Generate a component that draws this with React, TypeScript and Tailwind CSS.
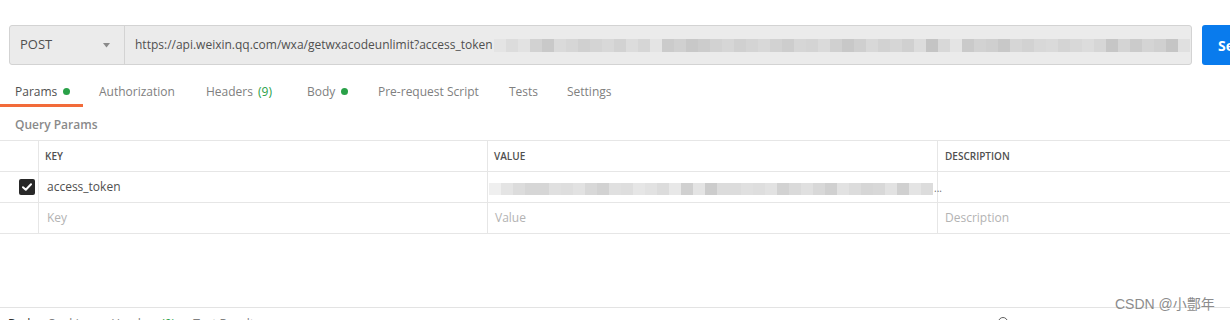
import React from "react";

const urlBlur = [
  "#e4e4e4", "#dcdcdc", "#e2e2e2", "#d2d2d2", "#c9c9c9", "#dadada", "#d6d6d6", "#d0d0d0",
  "#d4d4d4", "#d8d8d8", "#d2d2d2", "#dcdcdc", "#d6d6d6", "#e4e4e4", "#cbcbcb", "#d0d0d0",
  "#c8c8c8", "#cccccc", "#d2d2d2", "#d6d6d6", "#d0d0d0", "#d4d4d4", "#d8d8d8", "#d2d2d2",
  "#cdcdcd", "#d6d6d6", "#d4d4d4", "#dadada", "#d0d0d0", "#c8c8c8", "#cfcfcf", "#d8d8d8",
  "#d2d2d2", "#d6d6d6", "#d0d0d0", "#dcdcdc", "#c4c4c4", "#d8d8d8", "#e4e4e4", "#cacaca",
  "#d2d2d2", "#cfcfcf", "#c8c8c8", "#d6d6d6", "#d2d2d2", "#d8d8d8", "#dadada", "#d4d4d4",
  "#d8d8d8", "#dcdcdc", "#d6d6d6", "#c6c6c6", "#d4d4d4", "#cbcbcb", "#d4d4d4", "#d0d0d0",
  "#c5c5c5", "#e0e0e0",
];

const valueBlur = [
  "#efefef", "#e4e4e4", "#dcdcdc", "#d6d6d6", "#d6d6d6", "#e0e0e0", "#dedede", "#e2e2e2",
  "#d8d8d8", "#d2d2d2", "#e0e0e0", "#dedede", "#e6e6e6", "#e2e2e2", "#dcdcdc", "#e8e8e8",
  "#d0d0d0", "#e4e4e4", "#cccccc", "#dcdcdc", "#dcdcdc", "#e0e0e0", "#dedede", "#e2e2e2",
  "#d2d2d2", "#dadada", "#e0e0e0", "#d8d8d8", "#d0d0d0", "#e2e2e2", "#dcdcdc", "#d6d6d6",
  "#d8d8d8", "#e2e2e2", "#d0d0d0", "#e4e4e4", "#dcdcdc",
];

function Dot() {
  return <span className="inline-block w-[7px] h-[7px] rounded-full bg-[#2aa148] ml-[6px] align-middle mb-[2px]" />;
}

export default function App() {
  return (
    <div className="relative w-[1230px] h-[320px] overflow-hidden bg-white font-['Open_Sans',sans-serif] text-[#505050]">
      {/* top bar */}
      <div className="flex pt-[25px] pl-[9px] gap-[10px]">
        <div className="flex shrink-0 w-[1183px] h-[40px] rounded-[3px] border border-[#d3d3d3] bg-[#ebebeb] overflow-hidden">
          <div className="flex items-center justify-between w-[115px] shrink-0 border-r border-[#d3d3d3] pl-[10px] pr-[14px] text-[13px] text-[#505050]">
            <span>POST</span>
            <svg width="7" height="5" viewBox="0 0 7 5">
              <path d="M0 0 L7 0 L3.5 4.5 Z" fill="#8a8a8a" />
            </svg>
          </div>
          <div className="flex items-center pl-[10px] text-[12px] text-[#505050] whitespace-nowrap">
            <span>https://api.weixin.qq.com/wxa/getwxacodeunlimit?access_token</span>
            <div className="flex h-[13px] ml-[1px]">
              {urlBlur.map((c, i) => (
                <div key={i} className="w-[12px] h-full" style={{ backgroundColor: c }} />
              ))}
            </div>
          </div>
        </div>
        <div className="flex items-center w-[80px] h-[40px] shrink-0 rounded-[3px] bg-[#097bed] pl-[16px] text-[14px] font-bold text-white">
          Send
        </div>
      </div>

      {/* tabs */}
      <div className="flex h-[42px] text-[12px] text-[#808080]">
        <div className="relative w-[99px] shrink-0 pl-[15px] pt-[18px] text-[#505050]">
          <span>Params</span>
          <Dot />
          <div className="absolute left-0 bottom-0 w-[83px] h-[3px] bg-[#f26b3a]" />
        </div>
        <div className="w-[107px] shrink-0 pt-[18px]">Authorization</div>
        <div className="w-[101px] shrink-0 pt-[18px]">
          Headers <span className="text-[#2aa148] ml-[2px]">(9)</span>
        </div>
        <div className="w-[71px] shrink-0 pt-[18px]">
          <span>Body</span>
          <Dot />
        </div>
        <div className="w-[131px] shrink-0 pt-[18px]">Pre-request Script</div>
        <div className="w-[58px] shrink-0 pt-[18px]">Tests</div>
        <div className="shrink-0 pt-[18px]">Settings</div>
      </div>

      {/* query params */}
      <div className="h-[33px] pl-[15px] pt-[9px] text-[12px] font-semibold text-[#8a8a8a]">Query Params</div>

      <div className="grid grid-cols-[39px_449px_450px_1fr] border-t border-[#e6e6e6] text-[12px]">
        {/* header */}
        <div className="h-[31px] border-r border-b border-[#e6e6e6]" />
        <div className="h-[31px] flex items-center pl-[6px] border-r border-b border-[#e6e6e6] text-[10px] font-semibold text-[#505050]">KEY</div>
        <div className="h-[31px] flex items-center pl-[6px] border-r border-b border-[#e6e6e6] text-[10px] font-semibold text-[#505050]">VALUE</div>
        <div className="h-[31px] flex items-center pl-[7px] border-b border-[#e6e6e6] text-[10px] font-semibold text-[#505050]">DESCRIPTION</div>

        {/* row 1 */}
        <div className="h-[31px] flex items-center pl-[19px] border-r border-b border-[#e6e6e6]">
          <div className="w-[16px] h-[16px] rounded-[2px] bg-[#282828] flex items-center justify-center">
            <svg width="10" height="8" viewBox="0 0 10 8">
              <path d="M1 4.2 L3.8 6.8 L9 1.2" fill="none" stroke="#fff" strokeWidth="2" strokeLinecap="round" strokeLinejoin="round" />
            </svg>
          </div>
        </div>
        <div className="h-[31px] flex items-center pl-[8px] border-r border-b border-[#e6e6e6] text-[#505050]">access_token</div>
        <div className="h-[31px] flex items-center pl-[1px] border-r border-b border-[#e6e6e6]">
          <div className="flex h-[12px] mt-[3px]">
            {valueBlur.map((c, i) => (
              <div key={i} className="w-[12px] h-full" style={{ backgroundColor: c }} />
            ))}
          </div>
          <span className="ml-[1px] mt-[3px] text-[10px] text-[#707070]">...</span>
        </div>
        <div className="h-[31px] border-b border-[#e6e6e6]" />

        {/* row 2 */}
        <div className="h-[31px] border-r border-b border-[#e6e6e6]" />
        <div className="h-[31px] flex items-center pl-[8px] border-r border-b border-[#e6e6e6] text-[#b3b3b3]">Key</div>
        <div className="h-[31px] flex items-center pl-[7px] border-r border-b border-[#e6e6e6] text-[#b3b3b3]">Value</div>
        <div className="h-[31px] flex items-center pl-[7px] border-b border-[#e6e6e6] text-[#b3b3b3]">Description</div>
      </div>

      {/* empty area + divider */}
      <div className="h-[74px] border-b border-[#e3e3e3]" />

      {/* response tabs (cut off) */}
      <div className="flex items-start pt-[8px] text-[12px] text-[#808080] leading-[16px]">
        <span className="ml-[8px] text-[#303030]">Body</span>
        <span className="ml-[11px]">Cookies</span>
        <span className="ml-[20px]">Headers <span className="text-[#2aa148]">(9)</span></span>
        <span className="ml-[18px]">Test Results</span>
        <div className="ml-auto mr-[222px] mt-[1px] w-[10px] h-[10px] rounded-full border border-[#606060]" />
      </div>

      {/* watermark */}
      <div className="absolute left-[1115px] top-[295px] text-[14px] leading-[18px] text-[#8c8c8c] font-['Liberation_Sans','Noto_Sans_CJK_SC',sans-serif] whitespace-nowrap">
        CSDN @小鄷年
      </div>
    </div>
  );
}
